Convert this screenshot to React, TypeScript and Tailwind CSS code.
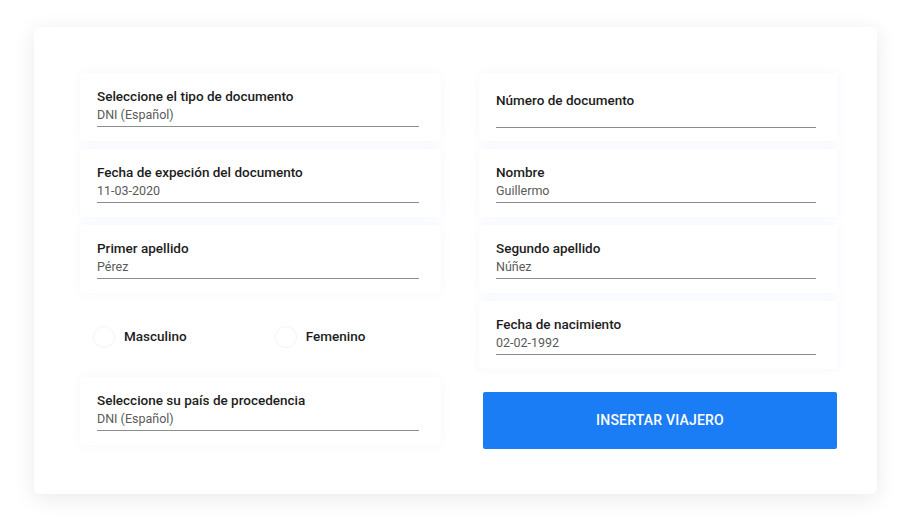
const fieldBox =
  'h-[68px] bg-white rounded-[3px] shadow-[0_0_10px_rgba(90,140,230,0.08)] pl-[17px] pr-[22px] flex flex-col justify-center'

function Field({ label, value }: { label: string; value?: string }) {
  return (
    <div className={fieldBox}>
      <span className={`text-[13.5px] leading-4 font-medium text-[#1d1d1d] ${value ? '' : 'mt-[6px]'}`}>{label}</span>
      <div className={`border-b border-[#8c8c8c] text-[12.5px] leading-4 text-[#5a5a5a] ${value ? 'mt-[3px] pb-[3px]' : 'mt-[2px] h-[18px]'}`}>
        {value}
      </div>
    </div>
  )
}

function Radio({ label }: { label: string }) {
  return (
    <label className="flex items-center gap-[9px] cursor-pointer">
      <span className="w-[22px] h-[22px] rounded-full border border-[#f1f4fa] bg-white" />
      <span className="text-[13.5px] font-medium text-[#1d1d1d]">{label}</span>
    </label>
  )
}

export default function App() {
  return (
    <div className="w-[922px] h-[527px] bg-white pt-[27px] pl-[34px]" style={{ fontFamily: 'Roboto, "Noto Sans", sans-serif' }}>
      <div className="w-[843px] h-[467px] bg-white rounded-[6px] shadow-[0_4px_22px_rgba(0,0,0,0.09)] pt-[46px] pl-[46px]">
        <div className="grid grid-cols-[361px_359px] gap-x-[38px] gap-y-[8px] auto-rows-[68px]">
          <Field label="Seleccione el tipo de documento" value="DNI (Español)" />
          <Field label="Número de documento" />
          <Field label="Fecha de expeción del documento" value="11-03-2020" />
          <Field label="Nombre" value="Guillermo" />
          <Field label="Primer apellido" value="Pérez" />
          <Field label="Segundo apellido" value="Núñez" />
          <div className="flex items-center pl-[13px] pt-[3px] gap-[88px]">
            <Radio label="Masculino" />
            <Radio label="Femenino" />
          </div>
          <Field label="Fecha de nacimiento" value="02-02-1992" />
          <Field label="Seleccione su país de procedencia" value="DNI (Español)" />
          <div className="pt-[15px] pl-[4px] pr-[1px]">
            <button className="w-full h-[57px] bg-[#1a7df5] rounded-[2px] text-white text-[14px] font-medium tracking-[0.2px]">
              INSERTAR VIAJERO
            </button>
          </div>
        </div>
      </div>
    </div>
  )
}
